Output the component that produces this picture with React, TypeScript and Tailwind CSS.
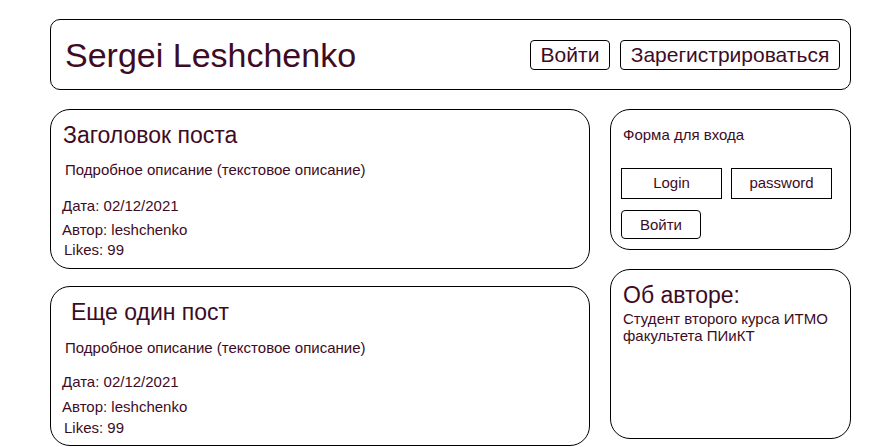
import React from "react";

const text = "text-[#3d0c24]";

type PostProps = {
  title: string;
  titleClass: string;
  gaps: [string, string, string, string];
};

function Post({ title, titleClass, gaps }: PostProps) {
  return (
    <div className="h-[160px] w-[540px] rounded-[20px] border border-black">
      <h2 className={`text-[23px] leading-[26px] ${titleClass}`}>{title}</h2>
      <p className={`ml-[14px] text-[15px] leading-[17px] ${gaps[0]}`}>
        Подробное описание (текстовое описание)
      </p>
      <p className={`ml-[11px] text-[15px] leading-[17px] ${gaps[1]}`}>Дата: 02/12/2021</p>
      <p className={`ml-[11px] text-[15px] leading-[17px] ${gaps[2]}`}>Автор: leshchenko</p>
      <p className={`ml-[13px] text-[15px] leading-[17px] ${gaps[3]}`}>Likes: 99</p>
    </div>
  );
}

export default function App() {
  return (
    <div
      className={`min-h-screen bg-white pl-[50px] pt-[19px] ${text}`}
      style={{ fontFamily: '"Liberation Sans", Arial, sans-serif' }}
    >
      {/* Header */}
      <header className="flex h-[71px] w-[801px] items-center justify-between rounded-[10px] border border-black pl-[14px] pr-[10px]">
        <h1 className="text-[34px] leading-none">Sergei Leshchenko</h1>
        <div className="flex gap-[10px]">
          <button className="h-[30px] w-[80px] rounded-[4px] border border-black text-[21px] leading-none">
            Войти
          </button>
          <button className="h-[30px] w-[220px] rounded-[4px] border border-black text-[21px] leading-none">
            Зарегистрироваться
          </button>
        </div>
      </header>

      <div className="mt-[19px] flex gap-[20px]">
        {/* Posts */}
        <div className="flex flex-col gap-[17px]">
          <Post
            title="Заголовок поста"
            titleClass="ml-[12px] mt-[12px]"
            gaps={["mt-[13px]", "mt-[19px]", "mt-[7px]", "mt-[3px]"]}
          />
          <Post
            title="Еще один пост"
            titleClass="ml-[20px] mt-[12px]"
            gaps={["mt-[14px]", "mt-[17px]", "mt-[8px]", "mt-[4px]"]}
          />
        </div>

        {/* Sidebar */}
        <div className="flex flex-col gap-[19px]">
          <div className="h-[141px] w-[241px] rounded-[20px] border border-black px-[10px]">
            <p className="ml-[2px] mt-[16px] text-[15px] leading-[17px]">Форма для входа</p>
            <div className="mt-[25px] flex gap-[9px]">
              <div className="flex h-[31px] w-[101px] items-center justify-center border border-black text-[15px]">
                Login
              </div>
              <div className="flex h-[31px] w-[101px] items-center justify-center border border-black text-[15px]">
                password
              </div>
            </div>
            <button className="mt-[11px] h-[29px] w-[80px] rounded-[4px] border border-black text-[15px] leading-none">
              Войти
            </button>
          </div>

          <div className="h-[170px] w-[241px] rounded-[20px] border border-black px-[12px]">
            <h3 className="mt-[12px] text-[23px] leading-[26px]">Об авторе:</h3>
            <p className="mt-[2px] text-[15px] leading-[17px]">
              Студент второго курса ИТМО
              <br />
              факультета ПИиКТ
            </p>
          </div>
        </div>
      </div>
    </div>
  );
}
